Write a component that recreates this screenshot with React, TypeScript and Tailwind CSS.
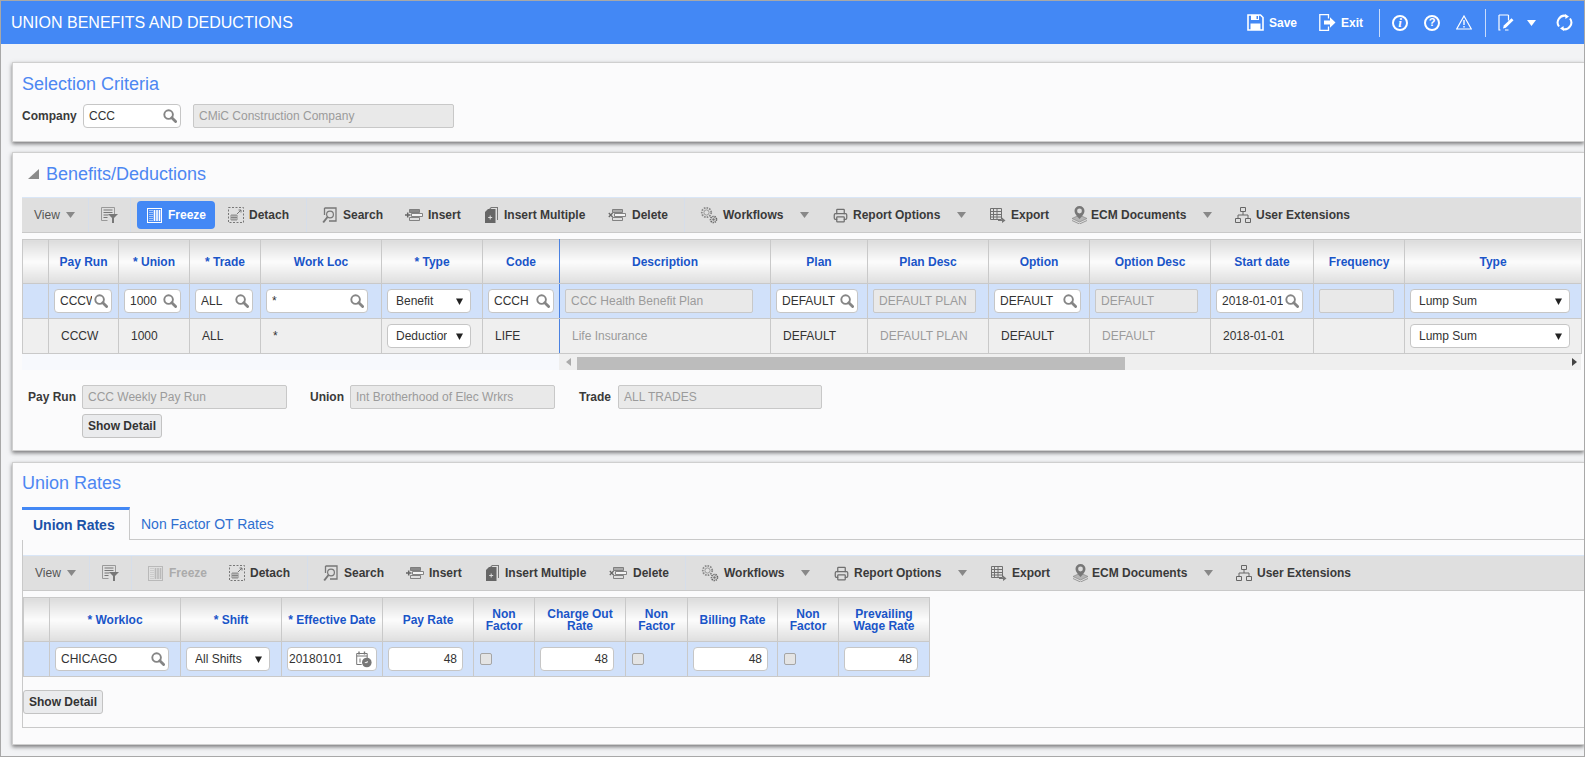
/**
 * Union Benefits and Deductions: pantalla de nómina con criterios, grilla y tarifas.
 */
import type { ReactNode } from "react";
import { Printer } from "lucide-react";

const GRAY = "#777";

function Caret({ className = "" }: { className?: string }) {
  return (
    <svg width="9" height="6" viewBox="0 0 9 6" className={className} aria-hidden>
      <path d="M0 0h9L4.5 6z" fill="#888" />
    </svg>
  );
}

function Glass() {
  return (
    <svg width="14" height="14" viewBox="0 0 14 14" className="ml-[2px] shrink-0" aria-hidden>
      <circle cx="5.6" cy="5.6" r="4.3" fill="none" stroke="#858585" strokeWidth="1.9" />
      <path d="M8.8 8.8 12.6 12.6" stroke="#858585" strokeWidth="2.8" strokeLinecap="round" />
    </svg>
  );
}

function FilterIcon({ color = GRAY }: { color?: string }) {
  return (
    <svg width="17" height="16" viewBox="0 0 17 16" aria-hidden>
      <path d="M.5.5h13v7M.5.5v13h6" fill="none" stroke="#999" />
      <path d="M2.5 3h9M2.5 5.5h9M2.5 8h5M2.5 10.5h4" stroke={color} strokeWidth="1.2" fill="none" />
      <path d="M7 7h10l-4 4v5h-2v-5z" fill={color} />
    </svg>
  );
}

function FreezeIcon({ color }: { color: string }) {
  return (
    <svg width="15" height="15" viewBox="0 0 15 15" aria-hidden>
      <rect x="0.5" y="0.5" width="14" height="14" fill="none" stroke={color} />
      <path d="M3 2v11M5 2v11" stroke={color} strokeDasharray="1 1" />
      <path d="M7.5 2v11M10 2v11M12.5 2v11" stroke={color} strokeWidth="1.6" />
    </svg>
  );
}

function DetachIcon() {
  return (
    <svg width="16" height="16" viewBox="0 0 16 16" aria-hidden>
      <rect x="0.5" y="0.5" width="15" height="15" fill="none" stroke={GRAY} strokeDasharray="2 1.5" />
      <path d="M3 8h6v5H3zM3 10.5h6M5 8v5M7 8v5" fill="none" stroke={GRAY} strokeWidth="0.8" />
      <path d="M9 7l4-4M10.5 3H13v2.5" fill="none" stroke={GRAY} />
    </svg>
  );
}

function SearchDocIcon() {
  return (
    <svg width="15" height="17" viewBox="0 0 15 17" aria-hidden>
      <path d="M2.5 1h11.5v13H7" fill="none" stroke={GRAY} strokeWidth="1.3" />
      <path d="M2.5 1v7" stroke={GRAY} strokeWidth="1.3" />
      <circle cx="8" cy="7.5" r="3.4" fill="none" stroke={GRAY} strokeWidth="1.2" />
      <path d="M5.5 10 1.2 15.5" stroke={GRAY} strokeWidth="2" />
    </svg>
  );
}

function RowIcon({ mark }: { mark: "plus" | "x" }) {
  return (
    <svg width="18" height="14" viewBox="0 0 18 14" aria-hidden>
      <path d="M4.5 1.5h10v3h-10z" fill={mark === "plus" ? "#8a8a8a" : "#aaa"} stroke="#777" strokeWidth=".9" />
      <path d="M6.5 5.5h11v3h-11z" fill="#f4f4f4" stroke="#777" strokeWidth=".9" />
      <path d="M4.5 9.5h10v3h-10z" fill="none" stroke="#777" strokeWidth=".9" />
      {mark === "plus" ? (
        <path d="M0 7h5.5M2.7 4.5v5" stroke="#666" strokeWidth="1.5" />
      ) : (
        <path d="M.8 5 4.6 9M4.6 5 .8 9" stroke="#666" strokeWidth="1.2" />
      )}
    </svg>
  );
}

function InsertMultipleIcon() {
  return (
    <svg width="13" height="16" viewBox="0 0 13 16" aria-hidden>
      <path d="M3 3 6 0h7v13h-1V1H6.5L4 3.5z" fill="#777" />
      <path d="M0 5 3 2h7.5v14H0z" fill="#666" />
      <path d="M3.2 10.5h4M5.2 8.5v4" stroke="#ddd" />
    </svg>
  );
}

function GearsIcon() {
  return (
    <svg width="18" height="18" viewBox="0 0 18 18" aria-hidden>
      <circle cx="6.5" cy="6.5" r="4.7" fill="none" stroke="#8a8a8a" strokeWidth="1.8" strokeDasharray="1.6 1.1" />
      <circle cx="6.5" cy="6.5" r="2.6" fill="none" stroke="#999" />
      <circle cx="13.5" cy="13.5" r="3" fill="none" stroke="#666" strokeWidth="1.6" strokeDasharray="1.3 .8" />
      <circle cx="13.5" cy="13.5" r="1.2" fill="#777" />
    </svg>
  );
}

function ExportIcon() {
  return (
    <svg width="16" height="15" viewBox="0 0 16 15" aria-hidden>
      <path d="M.5.5h11v11H.5zM.5 3.5h11M.5 6.5h11M.5 9h11M3.5.5v11M7 .5v11" fill="none" stroke="#707070" />
      <path d="M8 12h4V9.5l3.5 3-3.5 2.5V13H8z" fill="#777" />
    </svg>
  );
}

function EcmIcon() {
  return (
    <svg width="17" height="18" viewBox="0 0 17 18" aria-hidden>
      <path d="M1 12.5 8.5 9l7.5 3.5L8.5 16z" fill="#b5b5b5" stroke="#888" strokeWidth=".7" />
      <path d="M1 14.5 8.5 18l7.5-3.5" fill="none" stroke="#999" />
      <path d="M8.5 13C6 10 3.5 8 3.5 5a5 5 0 0 1 10 0c0 3-2.5 5-5 8z" fill="#777" />
      <circle cx="8.5" cy="5" r="2.4" fill="#ddd" />
    </svg>
  );
}

function TreeIcon() {
  return (
    <svg width="16" height="16" viewBox="0 0 16 16" aria-hidden>
      <path d="M5.5.5h5v4h-5zM.5 11.5h5v4h-5zM10.5 11.5h5v4h-5z" fill="none" stroke="#666" />
      <path d="M8 4.5V8M3 11.5V8h10v3.5" fill="none" stroke="#666" />
    </svg>
  );
}

function DateIcon() {
  return (
    <svg width="16" height="17" viewBox="0 0 16 17" aria-hidden>
      <path d="M.7 2.5h10.5v5M.7 2.5v11h5M.7 5h10.5" fill="none" stroke="#777" />
      <path d="M3 .5v3M8.5.5v3" stroke="#777" strokeWidth="1.4" />
      <path d="M4 7.5v4" stroke="#777" />
      <circle cx="10.8" cy="11.5" r="4.8" fill="#777" />
      <path d="M8.8 11.6h2.4V10" fill="none" stroke="#eee" />
    </svg>
  );
}

function Field({ text, className }: { text: string; className: string }) {
  return (
    <div className={`flex h-6 shrink-0 items-center rounded-[4px] border border-[#c6c6c6] bg-white pl-[5px] pr-[3px] text-[12px] text-[#333] ${className}`}>
      <span className="flex-1 overflow-hidden whitespace-nowrap">{text}</span>
      <Glass />
    </div>
  );
}

function Locked({ text, className }: { text: string; className: string }) {
  return (
    <div className={`flex h-6 shrink-0 items-center overflow-hidden whitespace-nowrap rounded-[2px] border border-[#c8c8c8] bg-[#e9e9e9] pl-[5px] text-[12px] text-[#9b9b9b] ${className}`}>
      {text}
    </div>
  );
}

function Choice({ text, className }: { text: string; className: string }) {
  return (
    <div className={`flex h-6 shrink-0 items-center rounded-[4px] border border-[#c6c6c6] bg-white pl-[8px] pr-[7px] text-[12px] text-[#333] ${className}`}>
      <span className="flex-1 overflow-hidden whitespace-nowrap">{text}</span>
      <svg width="7" height="7" viewBox="0 0 7 7" className="ml-[9px] shrink-0" aria-hidden>
        <path d="M0 .5h7L3.5 7z" fill="#222" />
      </svg>
    </div>
  );
}

function Amount({ className }: { className: string }) {
  return (
    <div className={`flex h-6 items-center justify-end rounded-[4px] border border-[#c6c6c6] bg-white pr-[5px] text-[12px] text-[#333] ${className}`}>
      48
    </div>
  );
}

function Check() {
  return <div className="ml-[1px] h-3 w-3 rounded-[2px] border border-[#a5a5a5] bg-[#e4e4e4]" />;
}

function ShowDetail() {
  return (
    <button className="flex h-6 w-[80px] items-center justify-center rounded-[3px] border border-[#c3c3c3] bg-[#eaebed] text-[12px] font-bold text-[#333]">
      Show Detail
    </button>
  );
}

function Tool({ icon, slot, width, label }: { icon: ReactNode; slot: string; width: string; label: string }) {
  return (
    <div className={`flex shrink-0 items-center whitespace-nowrap text-[12px] font-bold text-[#3a3a3a] ${width}`}>
      <span className={`flex shrink-0 items-center ${slot}`}>{icon}</span>
      {label}
    </div>
  );
}

function Rule() {
  return <div className="h-[34px] w-px shrink-0 bg-[#d6deea]" />;
}

function Toolbar({ frozen, className }: { frozen: boolean; className: string }) {
  return (
    <div className={`flex h-9 items-center border-t border-b border-t-[#d9e6f7] border-b-[#c9c9c9] bg-[#dfdfdf] pl-3 ${className}`}>
      <div className="flex w-[54px] shrink-0 items-center text-[12px] text-[#555]">
        <span className="w-8">View</span>
        <Caret />
      </div>
      <Rule />
      <div className="ml-3 w-4 shrink-0"><FilterIcon /></div>
      <div className="ml-[13px]"><Rule /></div>
      {frozen ? (
        <div className="ml-[6px] flex h-7 w-[78px] shrink-0 items-center rounded-[4px] bg-[#4388f5] pl-[10px] text-[12px] font-bold text-white">
          <span className="flex w-[21px] shrink-0 items-center"><FreezeIcon color="#fff" /></span>
          Freeze
        </div>
      ) : (
        <div className="ml-[6px] flex h-7 w-[78px] shrink-0 items-center pl-[10px] text-[12px] font-bold text-[#ababab]">
          <span className="flex w-[21px] shrink-0 items-center"><FreezeIcon color="#b9b9b9" /></span>
          Freeze
        </div>
      )}
      <div className="ml-[13px]">
        <Tool icon={<DetachIcon />} slot="w-[21px]" width="w-[78px]" label="Detach" />
      </div>
      <Rule />
      <div className="ml-[15px] flex items-center">
        <Tool icon={<SearchDocIcon />} slot="w-[21px]" width="w-[83px]" label="Search" />
        <Tool icon={<RowIcon mark="plus" />} slot="w-[23px]" width="w-[80px]" label="Insert" />
        <Tool icon={<InsertMultipleIcon />} slot="w-[19px]" width="w-[123px]" label="Insert Multiple" />
        <Tool icon={<RowIcon mark="x" />} slot="w-[24px]" width="w-[76px]" label="Delete" />
      </div>
      <Rule />
      <div className="ml-[15px] flex items-center">
        <Tool icon={<GearsIcon />} slot="w-[23px]" width="w-[100px]" label="Workflows" />
        <div className="w-[33px] shrink-0"><Caret /></div>
        <Tool icon={<Printer size={15} color="#6f6f6f" strokeWidth={2} />} slot="w-[20px]" width="w-[124px]" label="Report Options" />
        <div className="w-[33px] shrink-0"><Caret /></div>
        <Tool icon={<ExportIcon />} slot="w-[21px]" width="w-[81px]" label="Export" />
        <Tool icon={<EcmIcon />} slot="w-[20px]" width="w-[132px]" label="ECM Documents" />
        <div className="w-8 shrink-0"><Caret /></div>
        <Tool icon={<TreeIcon />} slot="w-[21px]" width="w-[150px]" label="User Extensions" />
      </div>
    </div>
  );
}

const headCell =
  "border border-[#c9c9c9] bg-linear-to-b from-[#dcdcdc] via-[#fcfcfc] to-[#dedede] p-0 text-center align-middle text-[12px] leading-3 font-bold text-[#1a55c8]";
const blueCell = "border border-[#c9c9c9] bg-[#d1e1fa] p-0 pl-[5px] align-middle";
const grayBase = "border border-[#c9c9c9] bg-[#efefef] p-0 align-middle text-[12px]";
const grayCell = `${grayBase} pl-[12px] text-[#333]`;
const dimCell = `${grayBase} pl-[12px] text-[#9b9b9b]`;
const pickCell = `${grayBase} pl-[5px]`;
const FROZEN_EDGE = "border-r-[#4a82e2]";

function BenefitsTable() {
  return (
    <table className="table-fixed border-collapse">
      <thead>
        <tr className="h-11">
          <th className={`${headCell} w-[26px]`} />
          <th className={`${headCell} w-[70px]`}>Pay Run</th>
          <th className={`${headCell} w-[71px]`}>* Union</th>
          <th className={`${headCell} w-[71px]`}>* Trade</th>
          <th className={`${headCell} w-[121px]`}>Work Loc</th>
          <th className={`${headCell} w-[101px]`}>* Type</th>
          <th className={`${headCell} ${FROZEN_EDGE} w-[77px]`}>Code</th>
          <th className={`${headCell} w-[211px]`}>Description</th>
          <th className={`${headCell} w-[97px]`}>Plan</th>
          <th className={`${headCell} w-[121px]`}>Plan Desc</th>
          <th className={`${headCell} w-[101px]`}>Option</th>
          <th className={`${headCell} w-[121px]`}>Option Desc</th>
          <th className={`${headCell} w-[103px]`}>Start date</th>
          <th className={`${headCell} w-[91px]`}>Frequency</th>
          <th className={`${headCell} w-[177px]`}>Type</th>
        </tr>
      </thead>
      <tbody>
        <tr className="h-[35px]">
          <td className={blueCell} />
          <td className={blueCell}><Field text="CCCW" className="w-[58px]" /></td>
          <td className={blueCell}><Field text="1000" className="w-[57px]" /></td>
          <td className={blueCell}><Field text="ALL" className="w-[58px]" /></td>
          <td className={blueCell}><Field text="*" className="w-[102px]" /></td>
          <td className={blueCell}><Choice text="Benefit" className="w-[84px]" /></td>
          <td className={`${blueCell} ${FROZEN_EDGE}`}><Field text="CCCH" className="w-[66px]" /></td>
          <td className={blueCell}><Locked text="CCC Health Benefit Plan" className="w-[188px]" /></td>
          <td className={blueCell}><Field text="DEFAULT" className="w-[82px]" /></td>
          <td className={blueCell}><Locked text="DEFAULT PLAN" className="w-[103px]" /></td>
          <td className={blueCell}><Field text="DEFAULT" className="w-[87px]" /></td>
          <td className={blueCell}><Locked text="DEFAULT" className="w-[103px]" /></td>
          <td className={blueCell}><Field text="2018-01-01" className="w-[87px]" /></td>
          <td className={blueCell}><Locked text="" className="w-[75px]" /></td>
          <td className={blueCell}><Choice text="Lump Sum" className="w-[160px]" /></td>
        </tr>
        <tr className="h-[35px]">
          <td className={grayCell} />
          <td className={grayCell}>CCCW</td>
          <td className={grayCell}>1000</td>
          <td className={grayCell}>ALL</td>
          <td className={grayCell}>*</td>
          <td className={pickCell}><Choice text="Deduction" className="w-[84px]" /></td>
          <td className={`${grayCell} ${FROZEN_EDGE}`}>LIFE</td>
          <td className={dimCell}>Life Insurance</td>
          <td className={grayCell}>DEFAULT</td>
          <td className={dimCell}>DEFAULT PLAN</td>
          <td className={grayCell}>DEFAULT</td>
          <td className={dimCell}>DEFAULT</td>
          <td className={grayCell}>2018-01-01</td>
          <td className={grayCell} />
          <td className={pickCell}><Choice text="Lump Sum" className="w-[160px]" /></td>
        </tr>
      </tbody>
    </table>
  );
}

function RatesTable() {
  return (
    <table className="table-fixed border-collapse">
      <thead>
        <tr className="h-11">
          <th className={`${headCell} w-[26px]`} />
          <th className={`${headCell} w-[131px]`}>* Workloc</th>
          <th className={`${headCell} w-[101px]`}>* Shift</th>
          <th className={`${headCell} w-[101px]`}>* Effective Date</th>
          <th className={`${headCell} w-[91px]`}>Pay Rate</th>
          <th className={`${headCell} w-[61px]`}>Non<br />Factor</th>
          <th className={`${headCell} w-[91px]`}>Charge Out<br />Rate</th>
          <th className={`${headCell} w-[62px]`}>Non<br />Factor</th>
          <th className={`${headCell} w-[90px]`}>Billing Rate</th>
          <th className={`${headCell} w-[61px]`}>Non<br />Factor</th>
          <th className={`${headCell} w-[91px]`}>Prevailing<br />Wage Rate</th>
        </tr>
      </thead>
      <tbody>
        <tr className="h-[35px]">
          <td className={blueCell} />
          <td className={blueCell}><Field text="CHICAGO" className="w-[114px]" /></td>
          <td className={blueCell}><Choice text="All Shifts" className="w-[84px]" /></td>
          <td className={blueCell}>
            <div className="flex h-6 w-[90px] items-center rounded-[4px] border border-[#c6c6c6] bg-white pl-[1px] pr-[4px] text-[12px] text-[#333]">
              <span className="flex-1">20180101</span>
              <DateIcon />
            </div>
          </td>
          <td className={blueCell}><Amount className="w-[75px]" /></td>
          <td className={blueCell}><Check /></td>
          <td className={blueCell}><Amount className="w-[74px]" /></td>
          <td className={blueCell}><Check /></td>
          <td className={blueCell}><Amount className="w-[75px]" /></td>
          <td className={blueCell}><Check /></td>
          <td className={blueCell}><Amount className="w-[74px]" /></td>
        </tr>
      </tbody>
    </table>
  );
}

function ScrollBar() {
  return (
    <div className="flex h-4 w-[1559px]">
      <div className="w-[537px] bg-[#f7f9fd]" />
      <div className="flex flex-1 items-center bg-[#efefef] pl-[7px]">
        <svg width="5" height="8" viewBox="0 0 5 8" aria-hidden><path d="M5 0v8L0 4z" fill="#aaa" /></svg>
        <div className="ml-[6px] mt-[3px] h-[13px] w-[548px] bg-[#bcbcbc]" />
        <svg width="5" height="8" viewBox="0 0 5 8" className="ml-[447px]" aria-hidden><path d="M0 0v8l5-4z" fill="#444" /></svg>
      </div>
    </div>
  );
}

function Panel({ className, children }: { className: string; children: ReactNode }) {
  return (
    <section className={`ml-[11px] border border-r-0 border-[#cfcfcf] bg-[#fbfbfc] shadow-[0_2px_4px_rgba(0,0,0,0.5)] ${className}`}>
      {children}
    </section>
  );
}

function Heading({ children, className = "" }: { children: ReactNode; className?: string }) {
  return <h2 className={`text-[18px] leading-[22px] text-[#4d87f2] ${className}`}>{children}</h2>;
}

function Label({ children, className }: { children: ReactNode; className: string }) {
  return <span className={`text-[12px] font-bold text-[#3a3a3a] ${className}`}>{children}</span>;
}

function Header() {
  return (
    <header className="flex h-[43px] items-center bg-[#4388f5] pl-[10px] text-white">
      <h1 className="text-[16px] font-normal">UNION BENEFITS AND DEDUCTIONS</h1>
      <div className="ml-auto flex items-center">
        <svg width="17" height="17" viewBox="0 0 17 17" aria-hidden>
          <path d="M1 1h12.5L16 3.5V16H1z" fill="none" stroke="#fff" strokeWidth="1.6" />
          <path d="M4 1h8v5H4z" fill="#fff" />
          <path d="M9.5 2h1.5v3H9.5z" fill="#4388f5" />
          <path d="M3.5 9.5h10V16h-10z" fill="#fff" />
        </svg>
        <span className="ml-[5px] w-[50px] text-[12px] font-bold">Save</span>
        <svg width="17" height="17" viewBox="0 0 17 17" aria-hidden>
          <path d="M9.5 4.5V.7H.8v15.6h8.7v-3.8" fill="none" stroke="#fff" strokeWidth="1.3" />
          <path d="M5 6.5h6V3.2L16.5 8.5 11 13.8v-3.3H5z" fill="#fff" />
        </svg>
        <span className="ml-[5px] w-[38px] text-[12px] font-bold">Exit</span>
        <div className="h-7 w-px bg-[#c9dcfb]" />
        <div className="ml-[12px] flex h-4 w-4 items-center justify-center rounded-full border-2 border-white font-['Liberation_Serif'] text-[13px] font-bold italic">i</div>
        <div className="ml-4 flex h-4 w-4 items-center justify-center rounded-full border-2 border-white text-[11px] font-bold">?</div>
        <svg width="16" height="15" viewBox="0 0 16 15" className="ml-4" aria-hidden>
          <path d="M8 1 15.3 14H.7z" fill="none" stroke="#fff" strokeWidth="1.2" />
          <path d="M8 5v5M8 11v1.5" stroke="#fff" strokeWidth="1.4" />
        </svg>
        <div className="ml-[13px] h-7 w-px bg-[#c9dcfb]" />
        <svg width="16" height="17" viewBox="0 0 16 17" className="ml-[12px]" aria-hidden>
          <path d="M2.5 1h8M1 1v15h1.5M1 1h1.5M7 16h3.5M10.5 1v5.5" fill="none" stroke="#fff" strokeWidth="1.2" />
          <path d="M5 14.5 5.8 11.5 13.5 4.2 15.5 6.2 7.8 13.7z" fill="#fff" />
        </svg>
        <svg width="9" height="6" viewBox="0 0 9 6" className="ml-[13px]" aria-hidden>
          <path d="M0 0h9L4.5 6z" fill="#fff" />
        </svg>
        <svg width="17" height="17" viewBox="0 0 17 17" className="ml-[20px] mr-[11px]" aria-hidden>
          <path d="M3 12.5A6.8 6.8 0 0 1 10.5 2M14 4.5A6.8 6.8 0 0 1 6.5 15" fill="none" stroke="#fff" strokeWidth="2" />
          <path d="M9 0l4 2.5L9.5 5zM8 17l-4-2.5L7.5 12z" fill="#fff" />
        </svg>
      </div>
    </header>
  );
}

export default function App() {
  return (
    <div className="h-[757px] w-[1585px] overflow-hidden border border-[#a8a8a8] bg-[#f2f3f5] font-['Liberation_Sans',sans-serif]">
      <Header />

      <Panel className="mt-[18px] h-[80px] pl-[9px] pt-[10px]">
        <Heading>Selection Criteria</Heading>
        <div className="mt-[9px] flex items-center">
          <Label className="w-[61px]">Company</Label>
          <Field text="CCC" className="w-[98px]" />
          <Locked text="CMiC Construction Company" className="ml-[12px] w-[261px]" />
        </div>
      </Panel>

      <Panel className="mt-[10px] h-[299px] pl-[9px] pt-[10px]">
        <div className="flex items-center pl-[6px]">
          <svg width="11" height="10" viewBox="0 0 11 10" aria-hidden>
            <path d="M11 0v10H0z" fill="#8b8b8b" />
          </svg>
          <Heading className="ml-[7px]">Benefits/Deductions</Heading>
        </div>
        <Toolbar frozen className="mt-[12px] w-[1559px]" />
        <div className="mt-[6px]"><BenefitsTable /></div>
        <ScrollBar />
        <div className="mt-[15px] flex items-center">
          <Label className="w-[60px] pl-[6px]">Pay Run</Label>
          <Locked text="CCC Weekly Pay Run" className="w-[205px]" />
          <Label className="w-[63px] pl-[23px]">Union</Label>
          <Locked text="Int Brotherhood of Elec Wrkrs" className="w-[205px]" />
          <Label className="w-[63px] pl-[24px]">Trade</Label>
          <Locked text="ALL TRADES" className="w-[204px]" />
        </div>
        <div className="ml-[60px] mt-[5px]"><ShowDetail /></div>
      </Panel>

      <Panel className="mt-[11px] h-[283px] pl-[9px] pt-[9px]">
        <Heading>Union Rates</Heading>
        <div className="mt-[13px] flex h-[33px] items-stretch">
          <div className="flex w-[108px] items-center border-t-[3px] border-r border-t-[#4388f5] border-r-[#c9c9c9] pl-[11px] text-[14px] font-bold text-[#1c52a8]">
            Union Rates
          </div>
          <div className="flex flex-1 items-center border-b border-[#c9c9c9] pl-[11px] pt-[2px] text-[14px] text-[#2f6fd0]">
            Non Factor OT Rates
          </div>
        </div>
        <div className="h-[188px] border-b border-l border-[#c9c9c9] pt-[15px]">
          <Toolbar frozen={false} className="w-full" />
          <div className="mt-[6px]"><RatesTable /></div>
          <div className="mt-[13px]"><ShowDetail /></div>
        </div>
      </Panel>
    </div>
  );
}
